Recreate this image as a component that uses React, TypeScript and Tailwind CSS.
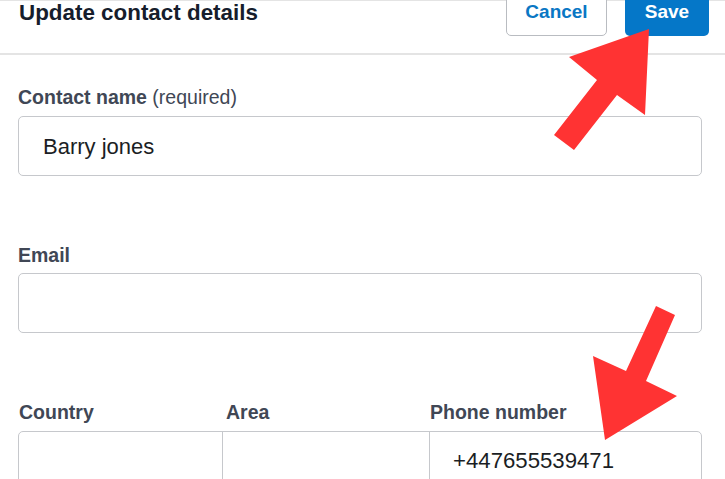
export default function App() {
  return (
    <div className="relative w-[725px] h-[479px] overflow-hidden bg-white font-['Liberation_Sans',Arial,sans-serif]">
      <div className="flex items-start justify-between h-[55px] border-t border-b-2 border-[#e4e4e4] pl-[19px] pr-[16px]">
        <h1 className="text-[22.4px] leading-[23px] font-bold text-[#161d2c]">Update contact details</h1>
        <div className="flex gap-[18px] -mt-[13px]">
          <button className="w-[101px] h-[48px] flex items-center justify-center rounded-[5px] border border-[#b9bcc1] bg-white text-[19px] font-bold text-[#0a77c4]">
            Cancel
          </button>
          <button className="w-[84px] h-[48px] flex items-center justify-center rounded-[5px] bg-[#0577c8] text-[19px] font-bold text-white">
            Save
          </button>
        </div>
      </div>

      <div className="px-[18px] pr-[23px] pt-[30px] flex flex-col gap-[67px]">
        <div>
          <label className="block text-[19.5px] leading-[24px] text-[#404755] mb-[7px]">
            <span className="font-bold">Contact name</span> (required)
          </label>
          <div className="h-[60px] flex items-center rounded-[5px] border border-[#c6c8cc] pl-[24px] text-[22px] text-[#1b1e24]">
            Barry jones
          </div>
        </div>

        <div>
          <label className="block text-[19.5px] leading-[24px] font-bold text-[#404755] mb-[6px]">Email</label>
          <div className="h-[60px] rounded-[5px] border border-[#c6c8cc]" />
        </div>

        <div>
          <div className="flex text-[19.5px] leading-[24px] font-bold text-[#404755] mb-[7px]">
            <span className="w-[204px] pl-[1px]">Country</span>
            <span className="w-[207px] pl-[4px]">Area</span>
            <span className="flex-1 pl-[1px]">Phone number</span>
          </div>
          <div className="h-[60px] flex rounded-[5px] border border-[#c6c8cc]">
            <div className="w-[204px] border-r border-[#c6c8cc]" />
            <div className="w-[207px] border-r border-[#c6c8cc]" />
            <div className="flex-1 flex items-center pl-[23px] text-[22.2px] text-[#1b1e24]">+447655539471</div>
          </div>
        </div>
      </div>

      <svg className="absolute inset-0 pointer-events-none" width="725" height="479" viewBox="0 0 725 479">
        <polygon
          fill="#ff3333"
          points="649,29 645,115 617,95 574,150 554,135 597,80 569,57"
        />
        <polygon
          fill="#ff3333"
          points="605,440 593,356 626,371 656,306 675,315 646,381 677,396"
        />
      </svg>
    </div>
  );
}
